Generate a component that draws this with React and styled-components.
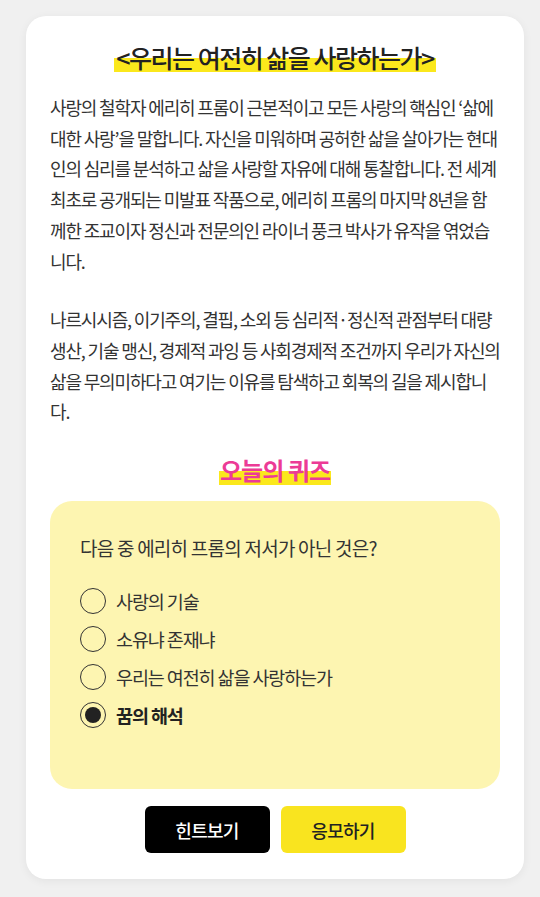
import React, { useState } from "react";
import styled, { createGlobalStyle } from "styled-components";

const Global = createGlobalStyle`
  html, body { margin: 0; padding: 0; background: #f0f0f0; }
  body { font-family: "Noto Sans CJK KR", "Noto Sans", sans-serif; color: #333; }
  * { box-sizing: border-box; }
`;

const Page = styled.div`
  padding: 16px 16px 19px 26px;
  width: 540px;
`;

const Card = styled.div`
  width: 498px;
  background: #fff;
  border-radius: 20px;
  box-shadow: 0 2px 10px rgba(0,0,0,0.06);
  padding: 26px 24px 26px 24px;
  display: flex;
  flex-direction: column;
  align-items: center;
`;

const Title = styled.h1`
  margin: 0;
  font-size: 25px;
  font-weight: 500;
  letter-spacing: -0.06em;
  color: #222;
  line-height: 30px;
  padding: 0 2px;
  background: linear-gradient(transparent 52%, #fbe81c 52%);
`;

const Body = styled.div`
  margin-top: 20px;
  width: 450px;
  font-size: 18px;
  line-height: 30.7px;
  letter-spacing: -1.15px;
  color: #333;
`;

const Para = styled.p`
  margin: 0 0 28px;
  &:last-child { margin-bottom: 0; }
`;

const QuizTitle = styled.h2`
  margin: 28px 0 0;
  font-size: 24px;
  font-weight: 700;
  letter-spacing: -0.04em;
  color: #ec3b96;
  line-height: 30px;
  padding: 0 1px;
  background: linear-gradient(transparent 55%, #fbe81c 55%);
`;

const QuizBox = styled.div`
  margin-top: 16px;
  width: 450px;
  height: 288px;
  background: #fdf5b1;
  border-radius: 22px;
  padding: 34px 30px;
`;

const Question = styled.div`
  font-size: 19px;
  letter-spacing: -0.04em;
  color: #333;
  line-height: 26px;
`;

const Options = styled.div`
  margin-top: 27px;
  display: flex;
  flex-direction: column;
  gap: 12px;
`;

const Option = styled.label`
  display: flex;
  align-items: center;
  gap: 10px;
  cursor: pointer;
  font-size: 18.5px;
  letter-spacing: -0.06em;
  line-height: 26px;
  font-weight: ${p => (p.$checked ? 700 : 400)};
  color: ${p => (p.$checked ? "#222" : "#333")};
`;

const Radio = styled.span`
  width: 26px;
  height: 26px;
  border-radius: 50%;
  border: 1.5px solid #333;
  display: flex;
  align-items: center;
  justify-content: center;
  flex-shrink: 0;
  &::after {
    content: "";
    width: 16px;
    height: 16px;
    border-radius: 50%;
    background: #222;
    display: ${p => (p.$checked ? "block" : "none")};
  }
`;

const Buttons = styled.div`
  margin-top: 17px;
  display: flex;
  gap: 11px;
`;

const Button = styled.button`
  width: 125px;
  height: 47px;
  border: none;
  border-radius: 6px;
  font-family: inherit;
  font-size: 18px;
  font-weight: 500;
  letter-spacing: -0.04em;
  background: ${p => (p.$primary ? "#f9e41f" : "#000")};
  color: ${p => (p.$primary ? "#222" : "#fff")};
`;

const options = ["사랑의 기술", "소유냐 존재냐", "우리는 여전히 삶을 사랑하는가", "꿈의 해석"];

export default function App() {
  const [sel, setSel] = useState(3);
  return (
    <Page>
      <Global />
      <Card>
        <Title>&lt;우리는 여전히 삶을 사랑하는가&gt;</Title>
        <Body>
          <Para>
            사랑의 철학자 에리히 프롬이 근본적이고 모든 사랑의 핵심인 ‘삶에 대한 사랑’을 말합니다. 자신을 미워하며 공허한 삶을 살아가는 현대인의 심리를 분석하고 삶을 사랑할 자유에 대해 통찰합니다. 전 세계 최초로 공개되는 미발표 작품으로, 에리히 프롬의 마지막 8년을 함께한 조교이자 정신과 전문의인 라이너 풍크 박사가 유작을 엮었습니다.
          </Para>
          <Para>
            나르시시즘, 이기주의, 결핍, 소외 등 심리적·정신적 관점부터 대량 생산, 기술 맹신, 경제적 과잉 등 사회경제적 조건까지 우리가 자신의 삶을 무의미하다고 여기는 이유를 탐색하고 회복의 길을 제시합니다.
          </Para>
        </Body>
        <QuizTitle>오늘의 퀴즈</QuizTitle>
        <QuizBox>
          <Question>다음 중 에리히 프롬의 저서가 아닌 것은?</Question>
          <Options>
            {options.map((o, i) => (
              <Option key={o} $checked={sel === i} onClick={() => setSel(i)}>
                <Radio $checked={sel === i} />
                {o}
              </Option>
            ))}
          </Options>
        </QuizBox>
        <Buttons>
          <Button>힌트보기</Button>
          <Button $primary>응모하기</Button>
        </Buttons>
      </Card>
    </Page>
  );
}
